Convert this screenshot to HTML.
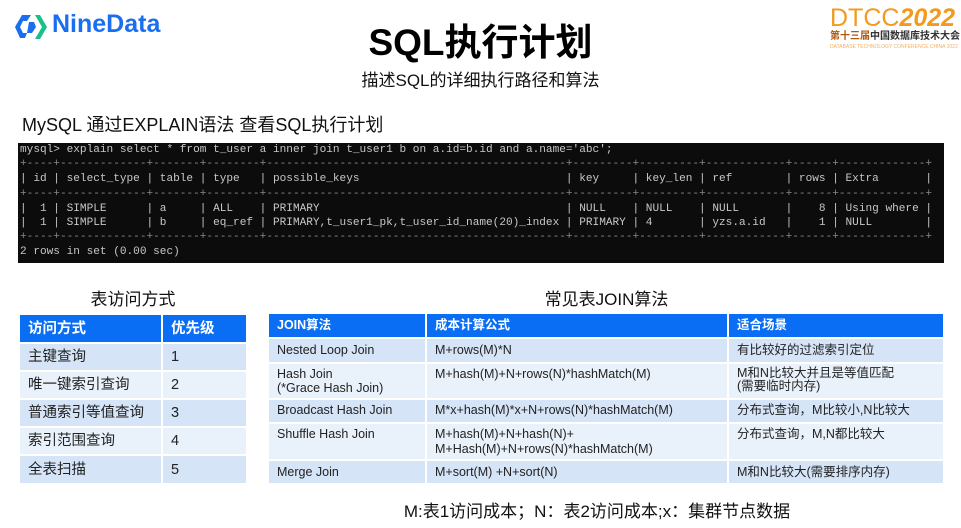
<!DOCTYPE html>
<html><head><meta charset="utf-8"><style>
*{margin:0;padding:0;box-sizing:border-box}
body{width:961px;height:528px;background:#fff;position:relative;overflow:hidden;font-family:"Liberation Sans","Noto Sans CJK SC",sans-serif;color:#222}
.a{position:absolute;white-space:nowrap}
.term{position:absolute;left:18px;top:143px;width:926px;height:120px;background:#0c0c0c;overflow:hidden}
.t{position:absolute;left:2px;font-family:"Liberation Mono","Noto Sans CJK SC",monospace;font-size:11.1px;color:#c8c8c8;white-space:pre;line-height:12px}
table{border-collapse:collapse;position:absolute}
td{padding:0 0 0 8px;font-size:12.5px;line-height:15px;vertical-align:top;border:2px solid #fff;color:#222}
.h td{background:#0a6ef5;color:#fff;font-weight:bold;vertical-align:middle}
.d td{background:#d5e4f7}
.l td{background:#e9f1fb}
#lt td{font-size:14.5px;line-height:18px;vertical-align:middle;padding-left:8px}
</style></head><body>
<svg class="a" style="left:14px;top:12px" width="34" height="30" viewBox="0 0 34 30">
<path d="M8 3 L17 3 L13 9 L9 9 L6 15 L9 21 L13 21 L11 26 L6 26 L1 15 Z" fill="#1a6ef0"/>
<path d="M15 10 L20 10 L22 15 L18 21 L13 21 Z" fill="#1a6ef0"/>
<path d="M21 3 L26 3 L33 15 L26 27 L21 27 L28 15 Z" fill="#18c08a"/>
</svg>
<div class="a" style="left:52px;top:10px;font-size:25px;font-weight:bold;color:#1a6ef0">NineData</div>
<div class="a" style="left:830px;top:4px;font-size:25px;color:#f39a1e;letter-spacing:0px">DTCC<b style="font-style:italic">2022</b></div>
<div class="a" style="left:830px;top:31px;font-size:10px;line-height:12px;color:#b05a10;font-weight:bold">第十三届<span style="color:#333">中国数据库技术大会</span></div>
<div class="a" style="left:830px;top:44px;font-size:5px;color:#f3b060">DATABASE TECHNOLOGY CONFERENCE CHINA 2022</div>
<div class="a" style="left:0;width:961px;text-align:center;top:12px;font-size:37px;font-weight:bold;color:#000">SQL执行计划</div>
<div class="a" style="left:0;width:961px;text-align:center;top:66px;font-size:17px;color:#111">描述SQL的详细执行路径和算法</div>
<div class="a" style="left:22px;top:111px;font-size:18px;color:#111">MySQL 通过EXPLAIN语法 查看SQL执行计划</div>
<div class="term">
<div class="t" style="top:1px">mysql&gt; explain select * from t_user a inner join t_user1 b on a.id=b.id and a.name='abc';</div>
<div class="t" style="top:15px;color:#888">+----+-------------+-------+--------+---------------------------------------------+---------+---------+------------+------+-------------+</div>
<div class="t" style="top:30px">| id | select_type | table | type   | possible_keys                               | key     | key_len | ref        | rows | Extra       |</div>
<div class="t" style="top:45px;color:#888">+----+-------------+-------+--------+---------------------------------------------+---------+---------+------------+------+-------------+</div>
<div class="t" style="top:60px">|  1 | SIMPLE      | a     | ALL    | PRIMARY                                     | NULL    | NULL    | NULL       |    8 | Using where |</div>
<div class="t" style="top:74px">|  1 | SIMPLE      | b     | eq_ref | PRIMARY,t_user1_pk,t_user_id_name(20)_index | PRIMARY | 4       | yzs.a.id   |    1 | NULL        |</div>
<div class="t" style="top:88px;color:#888">+----+-------------+-------+--------+---------------------------------------------+---------+---------+------------+------+-------------+</div>
<div class="t" style="top:103px">2 rows in set (0.00 sec)</div>
</div>
<div class="a" style="left:20px;width:226px;text-align:center;top:285px;font-size:17px;color:#111">表访问方式</div>
<div class="a" style="left:269px;width:675px;text-align:center;top:285px;font-size:17px;color:#111">常见表JOIN算法</div>
<table id="lt" style="left:18px;top:313px;width:230px">
<tr class="h" style="height:29px"><td style="width:143px">访问方式</td><td>优先级</td></tr>
<tr class="d" style="height:28px"><td>主键查询</td><td>1</td></tr>
<tr class="l" style="height:28px"><td>唯一键索引查询</td><td>2</td></tr>
<tr class="d" style="height:28px"><td>普通索引等值查询</td><td>3</td></tr>
<tr class="l" style="height:28px"><td>索引范围查询</td><td>4</td></tr>
<tr class="d" style="height:29px"><td>全表扫描</td><td>5</td></tr>
</table>
<table style="left:267px;top:312px;width:678px">
<tr class="h" style="height:25px"><td style="width:158px">JOIN算法</td><td style="width:302px">成本计算公式</td><td>适合场景</td></tr>
<tr class="d" style="height:25px"><td style="padding-top:4px">Nested Loop Join</td><td style="padding-top:4px">M+rows(M)*N</td><td style="padding-top:4px">有比较好的过滤索引定位</td></tr>
<tr class="l" style="height:36px"><td style="padding-top:3px;line-height:14px">Hash Join<br>(*Grace Hash Join)</td><td style="padding-top:3px">M+hash(M)+N+rows(N)*hashMatch(M)</td><td style="padding-top:3px;line-height:13px">M和N比较大并且是等值匹配<br>(需要临时内存)</td></tr>
<tr class="d" style="height:24px"><td style="padding-top:3px">Broadcast Hash Join</td><td style="padding-top:3px">M*x+hash(M)*x+N+rows(N)*hashMatch(M)</td><td style="padding-top:3px">分布式查询，M比较小,N比较大</td></tr>
<tr class="l" style="height:37px"><td style="padding-top:3px">Shuffle Hash Join</td><td style="padding-top:3px;line-height:15px">M+hash(M)+N+hash(N)+<br>M+Hash(M)+N+rows(N)*hashMatch(M)</td><td style="padding-top:3px">分布式查询，M,N都比较大</td></tr>
<tr class="d" style="height:24px"><td style="padding-top:4px">Merge Join</td><td style="padding-top:4px">M+sort(M) +N+sort(N)</td><td style="padding-top:4px">M和N比较大(需要排序内存)</td></tr>
</table>
<div class="a" style="left:269px;width:656px;text-align:center;top:497px;font-size:17px;color:#111">M:表1访问成本；N：表2访问成本;x：集群节点数据</div>
</body></html>
